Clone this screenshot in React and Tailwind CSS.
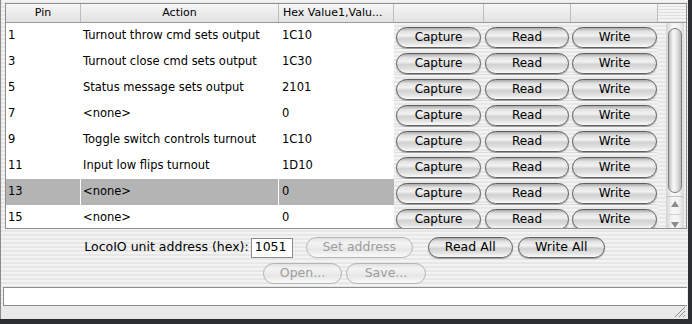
import React from 'react'
import clsx from 'clsx'

const rows = [
    { pin: '1', action: 'Turnout throw cmd sets output', hex: '1C10' },
    { pin: '3', action: 'Turnout close cmd sets output', hex: '1C30' },
    { pin: '5', action: 'Status message sets output', hex: '2101' },
    { pin: '7', action: '<none>', hex: '0' },
    { pin: '9', action: 'Toggle switch controls turnout', hex: '1C10' },
    { pin: '11', action: 'Input low flips turnout', hex: '1D10' },
    { pin: '13', action: '<none>', hex: '0', selected: true },
    { pin: '15', action: '<none>', hex: '0' },
]

const stripes = 'bg-[repeating-linear-gradient(180deg,#f3f3f3_0px,#f3f3f3_2px,#e7e7e7_2px,#e7e7e7_4px)]'

function AquaButton({ children, className, disabled }) {
    return (
        <button
            className={clsx(
                'h-[21px] rounded-full border flex items-center justify-center leading-none',
                disabled
                    ? 'border-[#b4b4b4] text-[#9c9c9c] bg-[linear-gradient(180deg,#e2e2e2_0%,#f3f3f3_25%,#ececec_50%,#e6e6e6_60%,#fafafa_100%)]'
                    : 'border-[#5e5e5e] text-black bg-[linear-gradient(180deg,#a9a9a9_0%,#e2e2e2_18%,#f2f2f2_40%,#d2d2d2_55%,#dedede_75%,#fbfbfb_100%)] shadow-[0_1px_1px_rgba(0,0,0,0.3)]',
                className
            )}
        >
            {children}
        </button>
    )
}

function Triangle({ up }) {
    return (
        <svg width="8" height="6" viewBox="0 0 8 6">
            <polygon points={up ? '4,0 8,6 0,6' : '0,0 8,0 4,6'} fill="#8c8c8c" />
        </svg>
    )
}

export default function App() {
    return (
        <div className="w-[692px] h-[324px] bg-[#2b2d33] font-['DejaVu_Sans',sans-serif] overflow-hidden">
            <div className={clsx('w-[688px] h-[319px] flex flex-col border-l border-[#8a8a8a]', stripes)}>
                {/* table */}
                <div className="ml-[4px] mt-[3px] w-[682px] border border-[#8e8e8e] bg-white">
                    <div className="flex h-[19px] border-b border-[#9a9a9a] bg-[linear-gradient(180deg,#f6f6f6,#e2e2e2)] text-[11px] text-black">
                        <div className="w-[75px] border-r border-[#bdbdbd] flex items-center justify-center">Pin</div>
                        <div className="w-[198px] border-r border-[#bdbdbd] flex items-center justify-center">Action</div>
                        <div className="w-[115px] border-r border-[#bdbdbd] flex items-center pl-[4px] whitespace-nowrap overflow-hidden">Hex Value1,Valu...</div>
                        <div className="w-[90px] border-r border-[#bdbdbd]" />
                        <div className="w-[87px] border-r border-[#bdbdbd]" />
                        <div className="w-[87px] border-r border-[#bdbdbd]" />
                        <div className="flex-1 bg-[repeating-linear-gradient(180deg,#f4f4f4_0px,#f4f4f4_2px,#dedede_2px,#dedede_3px)]" />
                    </div>
                    <div className="flex h-[205px] overflow-hidden">
                        <div className="w-[652px] flex flex-col">
                            {rows.map((r) => (
                                <div key={r.pin} className="flex h-[26px] shrink-0 text-[11.5px] text-black">
                                    <div className={clsx('w-[75px] border-r border-white flex items-center pl-[2px]', r.selected && 'bg-[#b4b4b4]')}>{r.pin}</div>
                                    <div className={clsx('w-[198px] border-r border-white flex items-center pl-[2px] whitespace-nowrap', r.selected && 'bg-[#b4b4b4]')}>{r.action}</div>
                                    <div className={clsx('w-[115px] flex items-center pl-[3px]', r.selected && 'bg-[#b4b4b4]')}>{r.hex}</div>
                                    <div className={clsx('flex pt-[3px] items-center text-[12px] border-b border-[#dcdcdc]', stripes)}>
                                        <div className="w-[90px] pl-[2px] pr-[3px]">
                                            <AquaButton className="w-full">Capture</AquaButton>
                                        </div>
                                        <div className="w-[87px] pl-[1px] pr-[2px]">
                                            <AquaButton className="w-full">Read</AquaButton>
                                        </div>
                                        <div className="w-[87px] pl-[1px] pr-[1px]">
                                            <AquaButton className="w-full">Write</AquaButton>
                                        </div>
                                    </div>
                                </div>
                            ))}
                        </div>
                        <div className={clsx('flex-1 flex', stripes)}>
                            <div className="ml-[8px] w-[18px] flex flex-col items-center bg-[linear-gradient(90deg,#d2d2d2,#f7f7f7_35%,#f2f2f2_70%,#d9d9d9)]">
                                <div className="mt-[5px] w-[14px] h-[169px] rounded-full border border-[#7a7a7a] bg-[linear-gradient(90deg,#bcbcbc,#f8f8f8_35%,#e6e6e6_65%,#b8b8b8)]" />
                                <div className="mt-[3px] w-full border-t border-[#c4c4c4] pt-[4px] flex flex-col items-center gap-[7px]">
                                    <Triangle up />
                                    <div className="w-[12px] border-t border-[#d0d0d0]" />
                                    <Triangle />
                                </div>
                            </div>
                        </div>
                    </div>
                </div>

                {/* address row */}
                <div className="mt-[8px] h-[21px] flex items-center justify-center text-[12.5px]">
                    <span className="text-black whitespace-nowrap">LocoIO unit address (hex):</span>
                    <div className="ml-[2px] w-[42px] h-[20px] border border-[#8a8a8a] bg-white flex items-center pl-[3px] text-[12.5px]">1051</div>
                    <AquaButton disabled className="ml-[13px] w-[107px]">Set address</AquaButton>
                    <AquaButton className="ml-[15px] w-[85px]">Read All</AquaButton>
                    <AquaButton className="ml-[5px] w-[87px]">Write All</AquaButton>
                </div>
                <div className="mt-[5px] h-[21px] flex items-center justify-center text-[12.5px]">
                    <AquaButton disabled className="w-[79px]">Open...</AquaButton>
                    <AquaButton disabled className="ml-[4px] w-[80px]">Save...</AquaButton>
                </div>

                {/* status field */}
                <div className="mt-[3px] ml-[2px] mr-[1px] h-[19px] border-t border-b border-l border-[#8c8c8c] bg-white" />
                <div className="flex-1 flex justify-end items-end bg-[#e9e9e9] pr-[2px] pb-[1px]">
                    <svg width="12" height="12" viewBox="0 0 12 12">
                        <line x1="11" y1="1" x2="1" y2="11" stroke="#8a8a8a" strokeWidth="1" />
                        <line x1="11" y1="5" x2="5" y2="11" stroke="#8a8a8a" strokeWidth="1" />
                        <line x1="11" y1="9" x2="9" y2="11" stroke="#8a8a8a" strokeWidth="1" />
                    </svg>
                </div>
            </div>
        </div>
    )
}
